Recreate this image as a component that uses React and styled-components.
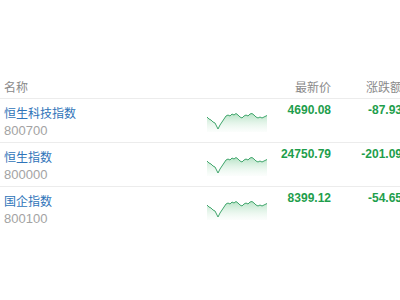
import React from "react";
import styled, { createGlobalStyle } from "styled-components";

const Global = createGlobalStyle`
  html, body { margin: 0; padding: 0; background: #fff; }
  body { font-family: "Liberation Sans", "Noto Sans CJK SC", sans-serif; }
`;

const Page = styled.div`
  width: 400px;
  height: 300px;
  overflow: hidden;
  padding-top: 76px;
  box-sizing: border-box;
`;

const Table = styled.div`
  width: 402px;
`;

const cols = `196px 75px 56px 71px`;

const HeadRow = styled.div`
  display: grid;
  grid-template-columns: ${cols};
  padding-left: 4px;
  height: 22px;
  line-height: 22px;
  border-bottom: 1px solid #ececec;
  font-family: "Noto Sans CJK SC", sans-serif;
  font-size: 12px;
  color: #8a8a8a;
`;

const HeadCell = styled.div`
  text-align: ${(p) => (p.$right ? "right" : "left")};
  white-space: nowrap;
`;

const Row = styled.div`
  display: grid;
  grid-template-columns: ${cols};
  padding-left: 4px;
  height: 43px;
  border-bottom: ${(p) => (p.$last ? "none" : "1px solid #ececec")};
`;

const NameCell = styled.div`
  padding-top: 5px;
  display: flex;
  flex-direction: column;
`;

const Name = styled.span`
  font-family: "Noto Sans CJK SC", sans-serif;
  font-size: 12px;
  line-height: 18px;
  color: #2f74b9;
`;

const Code = styled.span`
  font-size: 13px;
  line-height: 18px;
  color: #a3a3a3;
`;

const ChartCell = styled.div`
  padding-top: 13px;
  padding-left: 7px;
`;

const Num = styled.div`
  padding-top: 2px;
  font-size: 12px;
  line-height: 18px;
  font-weight: bold;
  color: #1e9e4c;
  text-align: right;
  white-space: nowrap;
`;

const pts = [
  [0, 4], [2, 6], [4, 7], [6, 9], [8, 10], [10, 14], [11, 16], [13, 12],
  [15, 9], [17, 6], [19, 3], [21, 2], [23, 3], [25, 1], [27, 2], [29, 0.5],
  [31, 2], [33, 4], [35, 5], [37, 3], [39, 2], [41, 3], [43, 1], [45, 0.5],
  [47, 2], [49, 4], [51, 5], [53, 4], [55, 5], [57, 4], [60, 2.5],
];

function Spark({ id }) {
  const line = pts.map(([x, y], i) => `${i ? "L" : "M"}${x} ${y + 1}`).join(" ");
  const area = `${line} L60 20 L0 20 Z`;
  return (
    <svg width="60" height="20" viewBox="0 0 60 20">
      <defs>
        <linearGradient id={id} x1="0" y1="0" x2="0" y2="1">
          <stop offset="0" stopColor="#84cf9e" stopOpacity="0.6" />
          <stop offset="1" stopColor="#e6f6eb" stopOpacity="0.15" />
        </linearGradient>
      </defs>
      <path d={area} fill={`url(#${id})`} />
      <path d={line} fill="none" stroke="#3fa56b" strokeWidth="1" />
    </svg>
  );
}

const data = [
  { name: "恒生科技指数", code: "800700", price: "4690.08", chg: "-87.93" },
  { name: "恒生指数", code: "800000", price: "24750.79", chg: "-201.09" },
  { name: "国企指数", code: "800100", price: "8399.12", chg: "-54.65" },
];

export default function App() {
  return (
    <>
      <Global />
      <Page>
        <Table>
          <HeadRow>
            <HeadCell>名称</HeadCell>
            <HeadCell />
            <HeadCell $right>最新价</HeadCell>
            <HeadCell $right>涨跌额</HeadCell>
          </HeadRow>
          {data.map((d, i) => (
            <Row key={d.code} $last={i === data.length - 1}>
              <NameCell>
                <Name>{d.name}</Name>
                <Code>{d.code}</Code>
              </NameCell>
              <ChartCell>
                <Spark id={`g${i}`} />
              </ChartCell>
              <Num>{d.price}</Num>
              <Num>{d.chg}</Num>
            </Row>
          ))}
        </Table>
      </Page>
    </>
  );
}
